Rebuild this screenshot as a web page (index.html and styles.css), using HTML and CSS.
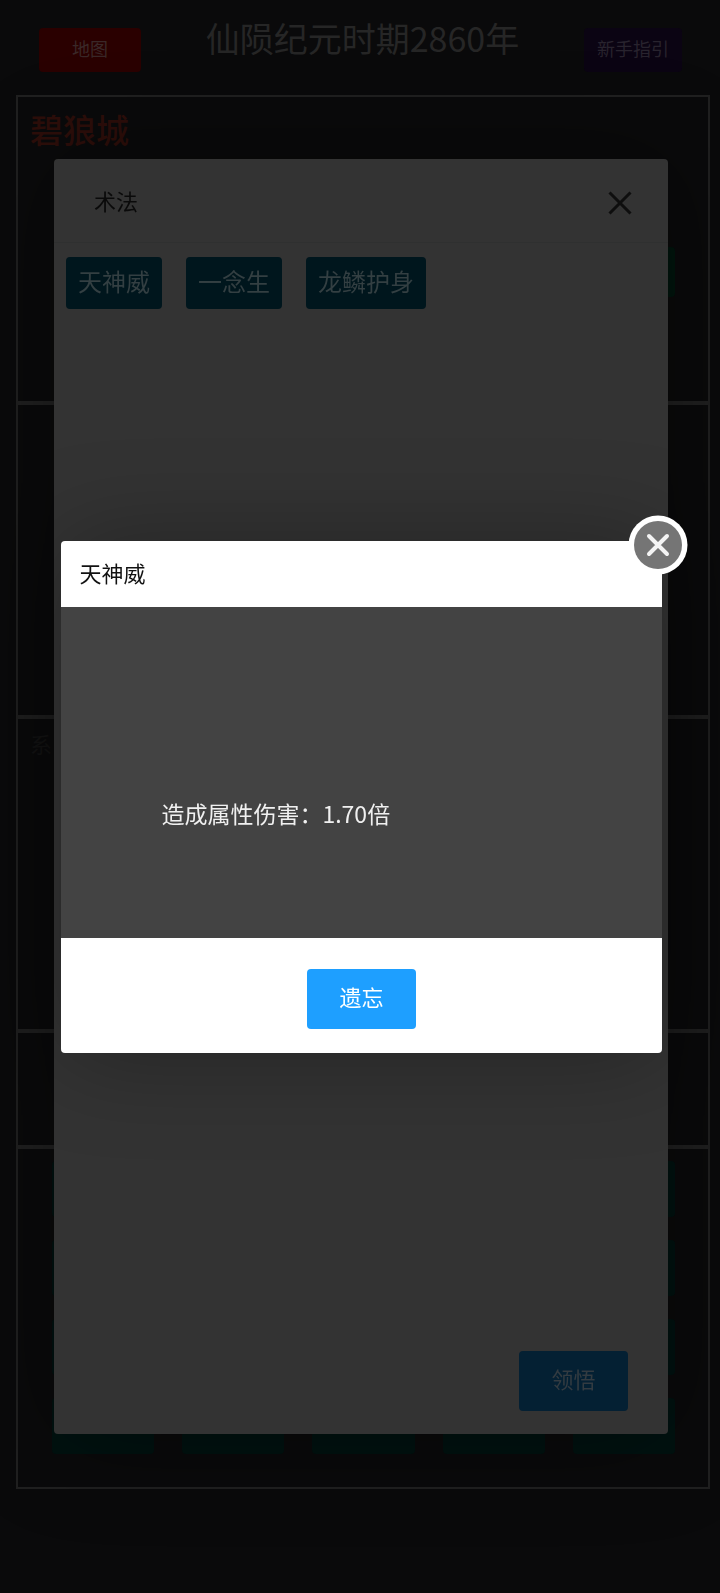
FILE: index.html
```html
<!DOCTYPE html>
<html lang="zh-CN">
<head>
<meta charset="utf-8">
<meta name="viewport" content="width=device-width, initial-scale=1">
<title>术法</title>
<link rel="stylesheet" href="styles.css">
</head>
<body>
<div class="page">
  <header class="topbar">
    <button type="button" class="top-btn top-btn-map">地图</button>
    <h1 class="era">仙陨纪元时期2860年</h1>
    <button type="button" class="top-btn top-btn-guide">新手指引</button>
  </header>
  <main class="panels">
    <section class="panel panel-city">
      <h2 class="city">碧狼城</h2>
      <div class="actions actions-city"><button type="button" class="action action-city"></button></div>
    </section>
    <section class="panel panel-large"></section>
    <section class="panel panel-large"><p class="log">系</p></section>
    <section class="panel panel-small"></section>
    <section class="panel panel-menu">
      <div class="actions">
        <button type="button" class="action"></button><button type="button" class="action"></button><button type="button" class="action"></button><button type="button" class="action"></button><button type="button" class="action"></button>
        <button type="button" class="action"></button><button type="button" class="action"></button><button type="button" class="action"></button><button type="button" class="action"></button><button type="button" class="action"></button>
        <button type="button" class="action"></button><button type="button" class="action"></button><button type="button" class="action"></button><button type="button" class="action"></button><button type="button" class="action"></button>
        <button type="button" class="action"></button><button type="button" class="action"></button><button type="button" class="action"></button><button type="button" class="action"></button><button type="button" class="action"></button>
      </div>
    </section>
  </main>
</div>

<div class="layer layer-spells">
  <section class="spells" role="dialog" aria-labelledby="spells-title">
    <header class="spells-head">
      <h2 class="dialog-title" id="spells-title">术法</h2>
      <button type="button" class="spells-close" aria-label="关闭">
        <svg width="24" height="24" viewBox="0 0 24 24"><path d="M1.5 1.5 22.5 22.5M22.5 1.5 1.5 22.5" fill="none" stroke="#0e0e0e" stroke-width="3"/></svg>
      </button>
    </header>
    <div class="spell-list">
      <button type="button" class="spell">天神威</button>
      <button type="button" class="spell">一念生</button>
      <button type="button" class="spell">龙鳞护身</button>
    </div>
    <footer class="spells-foot">
      <button type="button" class="btn btn-dim">领悟</button>
    </footer>
  </section>
</div>

<div class="layer layer-detail">
  <section class="detail" role="dialog" aria-labelledby="detail-title">
    <header class="detail-head"><h2 class="dialog-title" id="detail-title">天神威</h2></header>
    <div class="detail-body"><p class="effect">造成属性伤害：1.70倍</p></div>
    <footer class="detail-foot"><button type="button" class="btn">遗忘</button></footer>
    <button type="button" class="badge-close" aria-label="关闭">
      <svg width="60" height="60" viewBox="0 0 60 60"><circle cx="30" cy="30" r="29.5" fill="#fff"/><circle cx="30" cy="30" r="24" fill="#757575"/><path d="M21 21 39 39M39 21 21 39" fill="none" stroke="#f4f4f4" stroke-width="4" stroke-linecap="round"/></svg>
    </button>
  </section>
</div>
</body>
</html>
```
FILE: styles.css
```css
* { box-sizing: border-box; }

body {
  margin: 0;
  background: #0a0a0b;
  color: #262626;
  font-family: "Noto Sans CJK SC", sans-serif;
  font-size: 22px;
}

h1, h2, p { margin: 0; font-weight: 400; }

button {
  margin: 0;
  padding: 0;
  border: 0;
  font: inherit;
  cursor: pointer;
}

svg { display: block; }

.page {
  min-height: 100vh;
  padding: 0 10px 0 16px;
}

.topbar {
  display: flex;
  justify-content: space-between;
  align-items: flex-start;
  height: 95px;
  padding: 14px 28px 0 23px;
}

.top-btn {
  height: 44px;
  margin-top: 14px;
  padding-bottom: 4px;
  border-radius: 4px;
  font-size: 18px;
  line-height: 40px;
}

.top-btn-map {
  width: 102px;
  background: #2a0000;
  color: #3a2828;
}

.top-btn-guide {
  width: 98px;
  background: #0b0413;
  color: #28232e;
}

.era {
  font-size: 34px;
  line-height: 48px;
}

.panels { border: 1px solid #202020; }

.panel {
  border: 1px solid #202020;
  border-width: 1px 1px 2px;
}

.panel + .panel { border-top-width: 2px; }
.panel:last-child { border-bottom-width: 1px; }

.panel-city { height: 307px; }
.panel-large { height: 314px; }
.panel-small { height: 116px; }
.panel-menu { height: 341px; }

.city {
  padding: 8px 12px 0;
  color: #2d0e0a;
  font-size: 33px;
  font-weight: 500;
  line-height: 48px;
}

.log {
  padding: 7px 12px 0;
  color: #141414;
  line-height: 34px;
}

.actions {
  display: grid;
  grid-template-columns: repeat(5, 1fr);
  gap: 23px 28px;
  padding: 12px 33px 0 34px;
}

.actions-city { padding-top: 94px; }

.action {
  height: 56px;
  border-radius: 4px;
  background: #001210;
}

.action-city {
  grid-column: 5;
  height: 50px;
  background: #00150d;
}

.layer {
  position: fixed;
  inset: 0;
  display: grid;
  place-items: center;
}

.layer-spells { padding-left: 2px; }
.layer-detail { padding-left: 3px; }

.dialog-title {
  font-size: 22px;
  line-height: 34px;
}

.spells {
  display: flex;
  flex-direction: column;
  width: 85.5%;
  height: 80%;
  border-radius: 4px;
  background: #333;
  box-shadow: 2px 2px 100px rgba(0, 0, 0, 0.4);
}

.spells-head {
  display: flex;
  justify-content: space-between;
  height: 84px;
  padding: 24px 36px 0 40px;
  border-bottom: 1px solid #2f3030;
  color: #0a0a0a;
}

.spells-close {
  align-self: flex-start;
  padding-top: 8px;
  background: none;
}

.spell-list {
  display: flex;
  flex-wrap: wrap;
  gap: 24px;
  padding: 14px 12px;
}

.spell {
  height: 52px;
  padding: 0 12px 4px;
  border-radius: 4px;
  background: #00161d;
  color: #333f42;
  font-size: 24px;
  line-height: 48px;
}

.spells-foot {
  display: flex;
  justify-content: flex-end;
  margin-top: auto;
  padding: 0 40px 23px;
}

.btn {
  width: 109px;
  height: 60px;
  padding-bottom: 5px;
  border-radius: 4px;
  background: #1e9fff;
  color: #fff;
}

.btn-dim {
  background: #042033;
  color: #333b41;
}

.detail {
  position: relative;
  width: 83.7%;
  border-radius: 4px;
  background: #fff;
  box-shadow: 2px 2px 100px rgba(0, 0, 0, 0.3);
}

.detail-head {
  padding: 14px 18px 18px;
  color: #111;
}

.detail-body {
  padding: 189px 100px 108px;
  background: #434343;
  color: #f0f0f0;
}

.effect {
  font-size: 23px;
  line-height: 34px;
}

.detail-foot {
  display: flex;
  justify-content: center;
  padding: 31px 20px 24px;
}

.badge-close {
  position: absolute;
  top: -26px;
  right: -26px;
  border-radius: 50%;
  background: none;
}
```
